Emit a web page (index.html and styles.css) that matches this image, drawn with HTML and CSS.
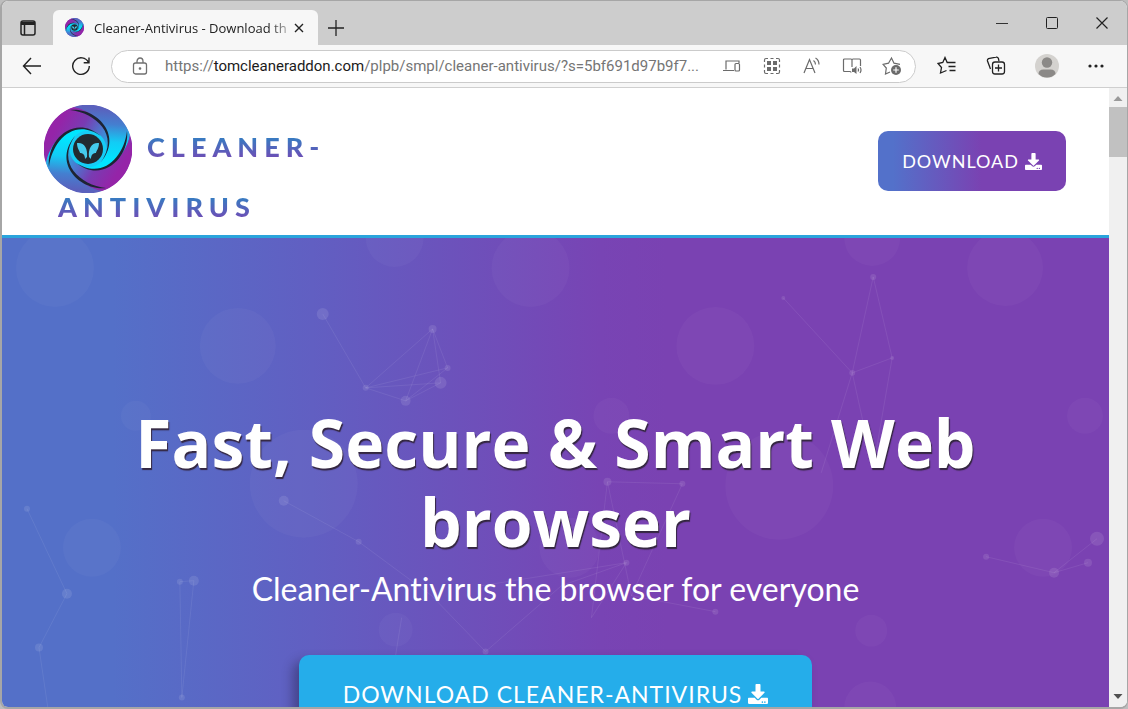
FILE: index.html
```html
<!DOCTYPE html>
<html lang="en">
<head>
<meta charset="utf-8">
<title>Cleaner-Antivirus</title>
<link rel="stylesheet" href="styles.css">
</head>
<body>
<svg class="defs" width="0" height="0" aria-hidden="true">
  <defs>
    <linearGradient id="violet" gradientUnits="userSpaceOnUse" x1="-26" y1="-30" x2="26" y2="2">
      <stop offset="0" stop-color="#9524a8"/><stop offset=".35" stop-color="#793bb2"/><stop offset=".75" stop-color="#3b8ed8"/><stop offset="1" stop-color="#08dcfa"/>
    </linearGradient>
    <linearGradient id="cyan" gradientUnits="userSpaceOnUse" x1="-40" y1="-20" x2="10" y2="-16">
      <stop offset="0" stop-color="#5a61bd"/><stop offset=".3" stop-color="#447fd0"/><stop offset=".65" stop-color="#12ccf5"/><stop offset="1" stop-color="#00e5ff"/>
    </linearGradient>
    <g id="edge" fill="#1d2433">
      <path d="M-18-39C8-42 36-14 13 13C32-14 8-36-18-39Z"/>
    </g>
    <path id="blade" d="M-42 14C-38-8-14-34 13-13L13 13C34-14 8-38-14-42A44 44 0 0 0-42 14Z"/>
    <symbol id="swirl" viewBox="-44 -44 88 88">
      <circle r="44" fill="#6551bb"/>
      <use href="#blade" fill="url(#violet)"/>
      <use href="#blade" fill="url(#cyan)" transform="rotate(90)"/>
      <use href="#blade" fill="url(#violet)" transform="rotate(180)"/>
      <use href="#blade" fill="url(#cyan)" transform="rotate(270)"/>
      <circle r="18.500" fill="#16cdf5"/>
      <use href="#edge"/><use href="#edge" transform="rotate(90)"/><use href="#edge" transform="rotate(180)"/><use href="#edge" transform="rotate(270)"/>
      <circle r="15" fill="#222a30"/>
      <path fill="#45cbed" d="M-11-6C-4-7 0-1-1 8L-3 10C-3 6-5 4-8 4C-8 2-11 0-11-6ZM11-6C4-7 0-1 1 8L3 10C3 6 5 4 8 4C8 2 11 0 11-6Z"/>
    </symbol>
    <symbol id="download" viewBox="0 0 512 512">
      <path fill="currentColor" fill-rule="evenodd" d="M216 0h80c13 0 24 11 24 24v168h87c18 0 27 22 14 34L269 378c-7 7-19 7-27 0L90 226c-12-12-3-34 15-34h87V24c0-13 11-24 24-24zm296 376v112c0 13-11 24-24 24H24c-13 0-24-11-24-24V376c0-13 11-24 24-24h147l49 49c20 20 52 20 72 0l49-49h147c13 0 24 11 24 24zM388 464a20 20 0 1 0-40 0 20 20 0 0 0 40 0zm64 0a20 20 0 1 0-40 0 20 20 0 0 0 40 0z"/>
    </symbol>
  </defs>
</svg>
<div class="window">
  <div class="titlebar">
    <button class="icon-button tab-menu" aria-label="Tab actions">
      <svg width="16" height="16" viewBox="0 0 16 16" fill="none" stroke="#222" stroke-width="1.500"><rect x="1" y="1" width="14" height="14" rx="2"/><path d="M1 3.500h14" stroke-width="3"/><path d="M4.500 4v11"/></svg>
    </button>
    <div class="tab">
      <svg class="favicon" aria-hidden="true"><use href="#swirl"/></svg>
      <span class="tab-title">Cleaner-Antivirus - Download th</span>
      <button class="icon-button" aria-label="Close tab"><svg width="10" height="10" viewBox="0 0 10 10" stroke="#222" stroke-width="1.400"><path d="M1 1l8 8M9 1L1 9"/></svg></button>
    </div>
    <button class="icon-button new-tab" aria-label="New tab"><svg width="16" height="16" viewBox="0 0 16 16" stroke="#222" stroke-width="1.300"><path d="M8 0v16M0 8h16"/></svg></button>
    <div class="window-controls">
      <button class="icon-button" aria-label="Minimize"><svg width="12" height="12" viewBox="0 0 12 12" stroke="#333"><path d="M0 6.500h12"/></svg></button>
      <button class="icon-button" aria-label="Maximize"><svg width="12" height="12" viewBox="0 0 12 12" fill="none" stroke="#222"><rect x=".5" y=".5" width="11" height="11" rx="1"/></svg></button>
      <button class="icon-button" aria-label="Close"><svg width="12" height="12" viewBox="0 0 12 12" stroke="#222" stroke-width="1.200"><path d="M.5.5l11 11M11.500.5l-11 11"/></svg></button>
    </div>
  </div>
  <div class="toolbar">
    <button class="icon-button back" aria-label="Back"><svg width="20" height="18" viewBox="0 0 20 18" fill="none" stroke="#222" stroke-width="1.400"><path d="M9 1L1.500 9L9 17M1.500 9H19"/></svg></button>
    <button class="icon-button reload" aria-label="Reload"><svg width="20" height="20" viewBox="0 0 20 20" fill="none" stroke="#222" stroke-width="1.400"><path d="M17.500 6.500A8.300 8.300 0 1 0 18.300 10M18 1.500V6.700H12.700"/></svg></button>
    <div class="address">
      <svg class="lock" width="16" height="18" viewBox="0 0 16 18" fill="none" stroke="#707070" stroke-width="1.300"><rect x="1.500" y="6" width="13" height="11" rx="2"/><path d="M5 6V4.500a3 3.500 0 0 1 6 0V6"/><circle cx="8" cy="11.500" r=".7" fill="#707070"/></svg>
      <span class="url">https://<b>tomcleaneraddon.com</b>/plpb/smpl/cleaner-antivirus/?s=5bf691d97b9f7...</span>
      <div class="address-actions">
        <button class="icon-button" aria-label="Send to device"><svg width="20" height="20" viewBox="0 0 20 20" fill="none" stroke="#6b6b6b" stroke-width="1.200"><path d="M4 13.500V5h13v2M1 14.500h11"/><rect x="13" y="7.500" width="4.500" height="7.500" rx="1"/></svg></button>
        <button class="icon-button" aria-label="Apps"><svg width="20" height="20" viewBox="0 0 20 20" fill="none" stroke="#6b6b6b" stroke-width="1.200"><path d="M2.500 6V4a1.500 1.500 0 0 1 1.500-1.500h2M8.500 2.500h3M14 2.500h2A1.500 1.500 0 0 1 17.500 4v2M17.500 8.500v3M17.500 14v2a1.500 1.500 0 0 1-1.500 1.500h-2M11.500 17.500h-3M6 17.500H4A1.500 1.500 0 0 1 2.500 16v-2M2.500 11.500v-3"/><path fill="#6b6b6b" stroke="none" d="M5 5h4v4H5zM11 5h4v4h-4zM5 11h4v4H5zM11 11h4v4h-4z"/></svg></button>
        <button class="icon-button" aria-label="Read aloud"><svg width="20" height="20" viewBox="0 0 20 20" fill="none" stroke="#6b6b6b" stroke-width="1.200"><path d="M2 17L7.500 3.500L13 17M4 12.500h7M11.500 4.500q2 1.500 2 4M13.500 2q3.500 2 3.500 6.500"/></svg></button>
        <button class="icon-button" aria-label="Immersive reader"><svg width="20" height="20" viewBox="0 0 20 20" fill="none" stroke="#6b6b6b" stroke-width="1.200"><path d="M9 16.500Q9 15.500 8 15.500H2.500a1 1 0 0 1-1-1V4a1 1 0 0 1 1-1H9q1 0 1 1V11M10 4q0-1 1-1h6.500a1 1 0 0 1 1 1v6"/><path fill="#6b6b6b" stroke="none" d="M10 12.500h2L14.500 10v8L12 16h-2z"/><path d="M16 12.500q1 1.500 0 3M18 11q2 3 0 6"/></svg></button>
        <button class="icon-button" aria-label="Add to favorites"><svg width="20" height="20" viewBox="0 0 20 20" fill="none" stroke="#6b6b6b" stroke-width="1.200"><path d="M8 16L3.500 18L4.300 12L1 8.300L6.500 7.200L9.500 2L12 7.200L18 8.300"/><circle cx="14" cy="14" r="5" fill="#6b6b6b" stroke="none"/><path stroke="#fff" d="M14 11.200v5.600M11.200 14h5.600"/></svg></button>
      </div>
    </div>
    <div class="browser-actions">
      <button class="icon-button" aria-label="Favorites"><svg width="20" height="20" viewBox="0 0 20 20" fill="none" stroke="#222" stroke-width="1.300"><path d="M18.500 6.500H10.200L8 1.500L5.800 6.500L1 7.500L4.500 11.500L3.500 17L9.500 14.500M11.500 10.500h7M12.500 14.500h6"/></svg></button>
      <button class="icon-button" aria-label="Collections"><svg width="20" height="20" viewBox="0 0 20 20" fill="none" stroke="#222" stroke-width="1.300"><path d="M4.500 13L1.500 5a2 2 0 0 1 1-2.300L10 1.200a2 2 0 0 1 2.400 1.300L13 5"/><rect x="6.500" y="6" width="12" height="12" rx="2.500"/><path d="M12.500 8.500v7M9 12h7"/></svg></button>
      <button class="icon-button" aria-label="Profile"><svg width="24" height="24" viewBox="0 0 24 24"><circle cx="12" cy="12" r="12" fill="#d4d2cf"/><circle cx="12" cy="8.500" r="5.200" fill="#8b8987"/><path fill="#8b8987" d="M3.500 20q0-4.500 5-4.500h7q5 0 5 4.500A12 12 0 0 1 3.500 20z"/></svg></button>
      <button class="icon-button" aria-label="Settings and more"><svg width="16" height="4" viewBox="0 0 16 4" fill="#222"><circle cx="2" cy="2" r="1.600"/><circle cx="8" cy="2" r="1.600"/><circle cx="14" cy="2" r="1.600"/></svg></button>
    </div>
  </div>
  <div class="viewport">
    <div class="page">
      <header class="site-header">
        <a class="brand" href="#"><svg class="brand-logo" aria-hidden="true"><use href="#swirl"/></svg><span class="brand-name">CLEANER-ANTIVIRUS</span></a>
        <a class="download-link" href="#">DOWNLOAD <svg class="download-icon" aria-hidden="true"><use href="#download"/></svg></a>
      </header>
      <main class="hero">
        <svg class="network" viewBox="0 0 1108 471" aria-hidden="true">
          <g fill="#fff" fill-opacity=".03">
            <circle cx="53" cy="30" r="39"/><circle cx="393" cy="0" r="29"/><circle cx="529" cy="30" r="39"/><circle cx="236" cy="108" r="38"/><circle cx="871" cy="0" r="28"/><circle cx="1004" cy="30" r="38"/><circle cx="714" cy="108" r="39"/><circle cx="134" cy="178" r="15"/><circle cx="610" cy="178" r="18"/><circle cx="1084" cy="178" r="18"/><circle cx="90" cy="310" r="29"/><circle cx="302" cy="246" r="54"/><circle cx="778" cy="248" r="54"/><circle cx="568" cy="310" r="30"/><circle cx="1042" cy="310" r="29"/><circle cx="394" cy="392" r="17"/><circle cx="870" cy="393" r="16"/><circle cx="869" cy="470" r="26"/>
          </g>
          <g fill="none" stroke="#fff" stroke-opacity=".08">
            <path d="M321 76L364 150L431 91L446 130L364 150L439 145L404 163L364 150M431 91L404 163M431 91L439 145M404 163L446 130M782 60L851 135L872 39L891 120L851 135L820 235M851 135L872 230L891 120M25 271L65 356L37 410L46 471M178 344L192 343L180 460ZM282 263L357 304L430 358L484 414L560 348L625 325L480 348M606 244L681 246L630 358L606 244L590 380M625 325L590 380M630 358L714 374M985 319L1053 335L1096 301M1053 335L1087 325M400 380L392 430"/>
          </g>
          <g fill="#fff" fill-opacity=".1">
            <circle cx="321" cy="76" r="6"/><circle cx="364" cy="150" r="3"/><circle cx="431" cy="91" r="4"/><circle cx="446" cy="130" r="3"/><circle cx="439" cy="145" r="6"/><circle cx="404" cy="163" r="5"/><circle cx="782" cy="60" r="2"/><circle cx="851" cy="135" r="3"/><circle cx="872" cy="39" r="3"/><circle cx="891" cy="120" r="2"/><circle cx="25" cy="271" r="3"/><circle cx="65" cy="356" r="5"/><circle cx="37" cy="410" r="4"/><circle cx="178" cy="344" r="3"/><circle cx="192" cy="343" r="5"/><circle cx="180" cy="460" r="3"/><circle cx="282" cy="263" r="5"/><circle cx="357" cy="304" r="3"/><circle cx="484" cy="414" r="3"/><circle cx="606" cy="244" r="4"/><circle cx="681" cy="246" r="3"/><circle cx="625" cy="325" r="3"/><circle cx="714" cy="374" r="3"/><circle cx="985" cy="319" r="3"/><circle cx="1053" cy="335" r="5"/><circle cx="1096" cy="301" r="7"/><circle cx="1087" cy="325" r="4"/>
          </g>
        </svg>
        <div class="hero-content">
          <h1>Fast, Secure &amp; Smart Web browser</h1>
          <p>Cleaner-Antivirus the browser for everyone</p>
          <a class="hero-download" href="#">DOWNLOAD CLEANER-ANTIVIRUS <svg class="download-icon" aria-hidden="true"><use href="#download"/></svg></a>
        </div>
      </main>
    </div>
    <div class="scrollbar" aria-hidden="true">
      <svg width="10" height="5" viewBox="0 0 10 5"><path fill="#9a9a9a" d="M5 0l4.500 5h-9z"/></svg>
      <div class="thumb"></div>
      <svg class="arrow-down" width="10" height="5" viewBox="0 0 10 5"><path fill="#505050" d="M5 5L.5 0h9z"/></svg>
    </div>
  </div>
</div>
</body>
</html>
```
FILE: styles.css
```css
* { box-sizing: border-box; }

body {
  margin: 0;
  background: #bdbdbd;
  font-family: "Open Sans", "Noto Sans", sans-serif;
}

.defs { position: absolute; }

svg { flex-shrink: 0; }

.window {
  display: flex;
  flex-direction: column;
  height: 100vh;
  border: 1px solid #a6a6a6;
  border-width: 1px 1px 2px 2px;
  border-radius: 8px;
  overflow: hidden;
  background: #f7f7f7;
}

.icon-button {
  display: flex;
  align-items: center;
  justify-content: center;
  padding: 0;
  border: 0;
  background: none;
}

.titlebar {
  display: flex;
  align-items: flex-end;
  height: 44px;
  flex-shrink: 0;
  background: #cdcdcd;
}

.tab-menu { width: 51px; height: 34px; }

.tab {
  display: flex;
  align-items: center;
  gap: 10px;
  width: 265px;
  height: 35px;
  padding: 0 14px 0 12px;
  border-radius: 6px 6px 0 0;
  background: #f7f7f7;
}

.tab .icon-button { margin-left: -8px; }

.favicon { width: 19px; height: 19px; }

.tab-title {
  flex: 1;
  overflow: hidden;
  white-space: nowrap;
  font-size: 13px;
  color: #222;
  mask-image: linear-gradient(to right, #000 88%, #0003);
}

.new-tab { width: 36px; height: 35px; }

.window-controls {
  display: flex;
  align-self: stretch;
  margin-left: auto;
}

.window-controls .icon-button { width: 50px; }

.toolbar {
  display: flex;
  align-items: center;
  height: 43px;
  flex-shrink: 0;
  border-bottom: 1px solid #cfcfcf;
  background: #f7f7f7;
}

.back { width: 60px; }
.reload { width: 38px; }

.address {
  display: flex;
  align-items: center;
  flex: 1;
  min-width: 0;
  height: 33px;
  margin-left: 11px;
  padding: 0 13px 0 20px;
  border: 1px solid #cbcbcb;
  border-radius: 17px;
  background: #fff;
}

.url {
  flex: 1;
  min-width: 0;
  margin-left: 17px;
  overflow: hidden;
  white-space: nowrap;
  font-family: Roboto, "Open Sans", sans-serif;
  font-size: 15px;
  color: #757575;
}

.url b { font-weight: 400; color: #1b1b1b; }

.address-actions { display: flex; gap: 20px; }

.browser-actions {
  display: flex;
  align-items: center;
  justify-content: space-between;
  width: 211px;
  padding: 0 23px 0 21px;
}

.viewport {
  display: flex;
  flex: 1;
  min-height: 0;
}

.page {
  display: flex;
  flex-direction: column;
  flex: 1;
  min-width: 0;
  overflow: hidden;
  font-family: Lato, "Open Sans", sans-serif;
  font-variant-ligatures: none;
}

.site-header {
  display: flex;
  align-items: flex-start;
  justify-content: space-between;
  flex-shrink: 0;
  padding: 17px 43px 15px 56px;
  border-bottom: 3px solid #2aa4dc;
  background: #fff;
}

.brand {
  width: 290px;
  font-size: 27px;
  font-weight: 900;
  line-height: 27px;
  letter-spacing: 6px;
  text-decoration: none;
}

.brand-logo {
  width: 88px;
  height: 88px;
  margin: 0 15px 0 -14px;
  vertical-align: -36px;
}

.brand-name {
  color: transparent;
  background: linear-gradient(#2a86c4 10%, #7746b4 95%);
  background-clip: text;
  box-decoration-break: clone;
  -webkit-box-decoration-break: clone;
}

.download-link,
.hero-download {
  display: flex;
  align-items: center;
  justify-content: center;
  gap: 6px;
  border-radius: 10px;
  color: #fff;
  text-decoration: none;
  letter-spacing: 1px;
}

.download-link {
  height: 60px;
  margin-top: 26px;
  padding: 0 24px;
  background: linear-gradient(to right, #5371ca 8%, #7a42b2 55%);
  font-size: 18px;
}

.download-icon { width: 17px; height: 17px; }

.hero-download .download-icon { width: 20px; height: 20px; }

.hero {
  position: relative;
  flex: 1 0 auto;
  background: linear-gradient(to right, #5470c8 10%, #615fc2 28%, #7844b4 54%, #7a42b2 60%);
}

.network {
  position: absolute;
  top: 0;
  left: 0;
  width: 100%;
}

.hero-content {
  position: relative;
  display: flex;
  flex-direction: column;
  align-items: center;
  padding: 165px 110px 0;
  color: #fff;
  text-align: center;
}

h1 {
  margin: 0;
  font-family: "Open Sans", "Noto Sans", sans-serif;
  font-size: 66px;
  font-weight: 700;
  line-height: 79px;
  text-shadow: 1px 2px 1px #33263f;
}

p {
  margin: 0;
  padding-top: 2px;
  font-size: 32px;
  line-height: 52px;
}

.hero-download {
  height: 78px;
  margin-top: 40px;
  padding: 0 44px;
  background: #25adea;
  box-shadow: -6px 6px 12px #0000004d;
  font-size: 23px;
}

.scrollbar {
  display: flex;
  flex-direction: column;
  align-items: center;
  width: 18px;
  padding: 8px 0;
  background: #f0f0f0;
}

.thumb {
  width: 100%;
  height: 50px;
  margin-top: 6px;
  background: #c1c1c1;
}

.arrow-down { margin-top: auto; }
```
